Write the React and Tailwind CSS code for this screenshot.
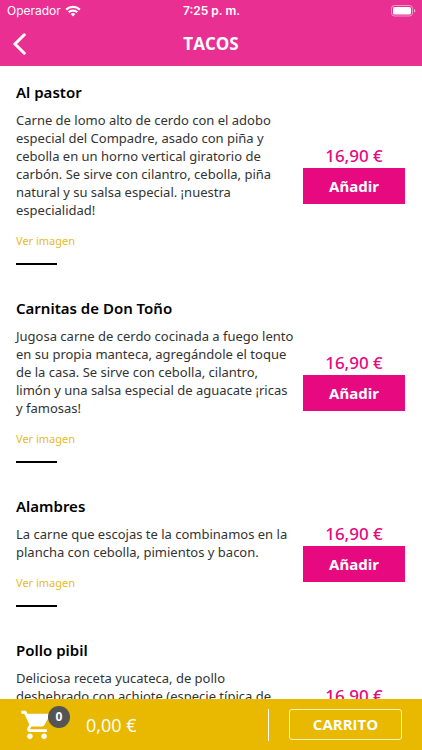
import { MdShoppingCart } from 'react-icons/md';

const tacos = [
    {
        name: 'Al pastor',
        description:
            'Carne de lomo alto de cerdo con el adobo especial del Compadre, asado con piña y cebolla en un horno vertical giratorio de carbón. Se sirve con cilantro, cebolla, piña natural y su salsa especial. ¡nuestra especialidad!',
        price: '16,90 €',
    },
    {
        name: 'Carnitas de Don Toño',
        description:
            'Jugosa carne de cerdo cocinada a fuego lento en su propia manteca, agregándole el toque de la casa. Se sirve con cebolla, cilantro, limón y una salsa especial de aguacate ¡ricas y famosas!',
        price: '16,90 €',
    },
    {
        name: 'Alambres',
        description: 'La carne que escojas te la combinamos en la plancha con cebolla, pimientos y bacon.',
        price: '16,90 €',
    },
    {
        name: 'Pollo pibil',
        description:
            'Deliciosa receta yucateca, de pollo deshebrado con achiote (especie típica de Yucatán), jugo de naranja y cebolla morada, servido con frijoles y habanero.',
        price: '16,90 €',
    },
];

function StatusBar() {
    return (
        <div className="grid h-[22px] grid-cols-3 items-center pl-[7px] pr-[6px] font-['Inter',sans-serif] text-[12px] leading-4">
            <div className="flex items-center gap-1">
                <span>Operador</span>
                <svg viewBox="0 0 16 12" className="h-3 w-4" fill="none" stroke="currentColor" strokeWidth="2.2" aria-hidden="true">
                    <path d="M1.200 4.600a9.800 9.800 0 0 1 13.600 0" />
                    <path d="M3.700 7.300a6.200 6.200 0 0 1 8.600 0" />
                    <path d="M8 11.400 5.700 9a3.300 3.300 0 0 1 4.600 0Z" fill="currentColor" stroke="none" />
                </svg>
            </div>
            <span className="text-center font-semibold">7:25 p. m.</span>
            <svg viewBox="0 0 25 12" className="h-3 w-[25px] justify-self-end" aria-hidden="true">
                <rect x="0.5" y="0.5" width="21" height="10.5" rx="3" fill="none" stroke="#fff" strokeOpacity="0.5" />
                <rect x="2" y="2" width="18" height="7.5" rx="1.6" fill="#fff" />
                <path d="M23 4v3.600c.9-.3 1.400-1 1.400-1.800S23.900 4.300 23 4Z" fill="#fff" fillOpacity="0.6" />
            </svg>
        </div>
    );
}

function MenuItem({ item }) {
    return (
        <li className="flex items-center gap-2 pb-8">
            <div className="min-w-0 flex-1">
                <h2 className="text-[15px] font-semibold leading-[22px] text-black">{item.name}</h2>
                <p className="mt-2 text-[13px] leading-[18px] text-[#333333]">{item.description}</p>
                <a href="#imagen" className="mt-[13px] block text-[11px] leading-[18px] text-[#e8bb1c]">
                    Ver imagen
                </a>
                <div className="mt-[13px] h-[2px] w-[41px] bg-black" />
            </div>
            <div className="flex w-[102px] shrink-0 flex-col pt-[2px]">
                <span className="text-center text-[17px] font-medium leading-6 text-[#e6097f]">{item.price}</span>
                <button type="button" className="h-9 bg-[#e6097f] text-[15px] font-bold text-white">
                    Añadir
                </button>
            </div>
        </li>
    );
}

export default function App() {
    return (
        <div className="flex h-dvh flex-col bg-white font-['Open_Sans',sans-serif]">
            <header className="shrink-0 bg-[#e92f92] text-white">
                <StatusBar />
                <div className="grid h-11 grid-cols-3 items-center px-3">
                    <button type="button" aria-label="Volver" className="justify-self-start">
                        <svg viewBox="0 0 14 22" className="h-[22px] w-[14px]" fill="none" stroke="currentColor" strokeWidth="3" strokeLinecap="round" aria-hidden="true">
                            <path d="M12.300 1.800 3 11l9.300 9.200" />
                        </svg>
                    </button>
                    <h1 className="text-center text-[17px] font-bold leading-6">TACOS</h1>
                </div>
            </header>

            <main className="min-h-0 flex-1 overflow-y-auto pl-4 pr-[17px] pt-[15px] font-['Noto_Sans',sans-serif] [scrollbar-width:none]">
                <ul>
                    {tacos.map((item) => (
                        <MenuItem key={item.name} item={item} />
                    ))}
                </ul>
            </main>

            <footer className="flex h-[51px] shrink-0 items-center bg-[#e8b900] px-5 text-white">
                <div className="relative">
                    <MdShoppingCart className="h-[34px] w-[34px]" />
                    <span className="absolute -top-[2px] left-7 flex h-[22px] w-[22px] items-center justify-center rounded-full bg-[#545454] text-[12px] font-bold">
                        0
                    </span>
                </div>
                <span className="ml-8 text-[18px] leading-6">0,00 €</span>
                <div className="ml-auto mr-5 h-8 w-px bg-white" />
                <button type="button" className="h-[31px] w-[113px] rounded-[3px] border border-[#fff3b8] text-[15px] font-bold">
                    CARRITO
                </button>
            </footer>
        </div>
    );
}
